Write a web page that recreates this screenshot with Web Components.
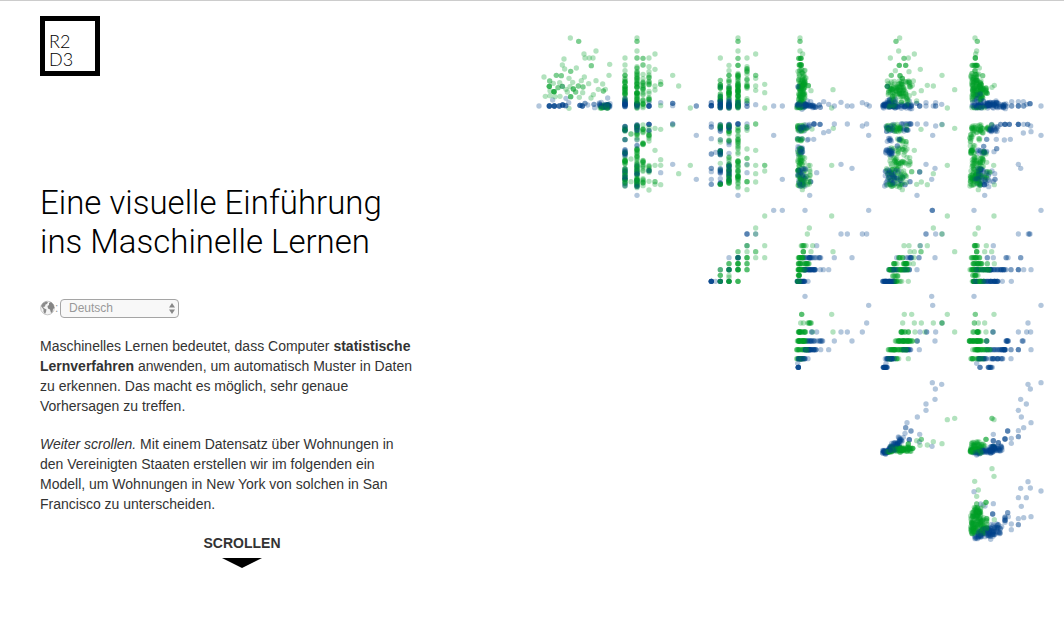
<!DOCTYPE html>
<html lang="de">
<head>
<meta charset="utf-8">
<meta name="viewport" content="width=device-width, initial-scale=1">
<title>Eine visuelle Einführung ins Maschinelle Lernen</title>
<style>
  body { margin: 0; background: #fff; color: #333; font-family: "Helvetica Neue", "Liberation Sans", Arial, sans-serif; }
</style>
</head>
<body>
<intro-page>
  <site-logo slot="logo"></site-logo>
  <page-title slot="intro">Eine visuelle Einführung<br>ins Maschinelle Lernen</page-title>
  <language-picker slot="intro"></language-picker>
  <text-block slot="intro">Maschinelles Lernen bedeutet, dass Computer <strong>statistische Lernverfahren</strong> anwenden, um automatisch Muster in Daten zu erkennen. Das macht es möglich, sehr genaue Vorhersagen zu treffen.</text-block>
  <text-block slot="intro"><em>Weiter scrollen.</em> Mit einem Datensatz über Wohnungen in den Vereinigten Staaten erstellen wir im folgenden ein Modell, um Wohnungen in New York von solchen in San Francisco zu unterscheiden.</text-block>
  <scroll-cue slot="intro">SCROLLEN</scroll-cue>
  <scatter-matrix slot="chart"></scatter-matrix>
</intro-page>

<script>
const define = (name, html, setup) => customElements.define(name, class extends HTMLElement {
  constructor() {
    super();
    const t = document.createElement('template');
    t.innerHTML = html;
    this.attachShadow({ mode: 'open' }).append(t.content.cloneNode(true));
    if (setup) setup(this.shadowRoot);
  }
});

define('site-logo', `
<style>
  :host { display: block; }
  a { display: flex; flex-direction: column; justify-content: flex-end; box-sizing: border-box; width: 60px; height: 60px;
      padding: 0 0 3px 4px; border: 5px solid #000; color: #000; text-decoration: none;
      font: 300 18px/18px Lato, sans-serif; }
</style>
<a href="#"><span>R2</span><span>D3</span></a>`);

define('page-title', `
<style>
  :host { display: block; }
  h1 { margin: 0; color: #000; font: 300 33px/39px Roboto, "Helvetica Neue", sans-serif; white-space: nowrap; }
</style>
<h1><slot></slot></h1>`);

define('language-picker', `
<style>
  :host { display: flex; align-items: center; height: 20px; margin: 37px 0 18px; color: #999; font-size: 12px; }
  label { display: flex; align-items: center; width: 20px; }
  .box { display: grid; width: 119px; }
  select, .arrows { grid-area: 1 / 1; }
  select { appearance: none; box-sizing: border-box; height: 19px; margin: 0; padding: 0 20px 1px 8px; border: 1px solid #a5a5a5;
           border-radius: 4px; background: #f8f8f8; color: #999; font: inherit; line-height: 16px; }
  .arrows { justify-self: end; align-self: center; margin-right: 4px; pointer-events: none; }
</style>
<label for="lang" aria-label="Sprache">
  <svg width="15" height="16" viewBox="0 0 15 16" aria-hidden="true">
    <circle cx="7.500" cy="8" r="6.800" fill="#f4f4f4" stroke="#bbb" stroke-width=".8"/>
    <path fill="#8c8c8c" d="M1 6 3 3 6 1.500 8 2 7 4 5.500 4.500 5 6.500 3 7 4.500 8.500 6.500 9.500 6 12 5 14 3.500 12 3.500 9.500Z"/>
    <path fill="#858585" d="M9 3 11 2 13.500 4.500 14.500 8 13 9 12.500 12 11 13 10 9.500 8 8.500 7.500 6 9 5Z"/>
  </svg>:
</label>
<span class="box">
  <select id="lang"><option>Deutsch</option><option>English</option><option>Français</option><option>Español</option></select>
  <svg class="arrows" width="6" height="11" viewBox="0 0 6 11" aria-hidden="true"><path fill="#888" d="M0 4.500 3 0 6 4.500ZM0 6.500H6L3 11Z"/></svg>
</span>`);

define('text-block', `
<style>
  :host { display: block; }
  p { max-width: 380px; margin: 0 0 18px; font-size: 14px; line-height: 20px; }
</style>
<p><slot></slot></p>`);

define('scroll-cue', `
<style>
  :host { display: block; max-width: 404px; }
  a { display: flex; flex-direction: column; align-items: center; gap: 4px; color: #333; font-size: 14px; font-weight: bold;
      line-height: 22px; text-decoration: none; }
</style>
<a href="#daten"><span><slot></slot></span>
  <svg width="40" height="10" viewBox="0 0 40 10" aria-hidden="true"><path d="M0 0H40L20 10Z"/></svg>
</a>`);

define('intro-page', `
<style>
  :host { display: block; border-top: 1px solid #ccc; }
  main { display: grid; grid-template-columns: minmax(0, 49fr) minmax(0, 52fr); padding: 15px 14px 0 40px; }
  .intro { padding-top: 107px; }
  .chart { padding-top: 9px; }
</style>
<main>
  <div><slot name="logo"></slot><div class="intro"><slot name="intro"></slot></div></div>
  <div class="chart"><slot name="chart"></slot></div>
</main>`);

/* Each panel: origin, then San Francisco (green) and New York (blue) homes.
   "x,y*n" is n homes at a place; "a:b" spreads them evenly, "m~s" around a mean. */
const PANELS = [
[0,0,
`121,39 146,49*2 198,78 162,87 165,99 178,99 189,99 102,102 97,120 184,122*2 239,118 139,129 104,132 122,139*2 79,151*2 94,152*2 117,160 42,156 163,156 154,167 237,151 198,167 59,168*2 70,175 89,173 128,172 145,183*2 159,186*2 97,184*2 58,184*4 72,200*5 60,197 84,188*2 108,193 120,185 130,192*3 137,201*2 122,215*3 176,176 205,193 218,177 220,198*2 226,193 158,203 190,209 183,219 46,214 112,201 90,214 60,212 75,215 148,217 210:236,240:250*16 117,250`,
`27,243 58,243*6 73,243*6 88,243*4 98,240*5 107,242*3 116,233 108,220 150,241*4 157,243*4 165,235*2 173,240 192,238*2 194,248 214,232 205:242,242~3*22 233,219 68,225 97,184`],
[0,0,
`321,39 321,49*2 321,78 285,99 285,120 285,137 285,151*3 285,160:178*5 285,185*5 285,190:235*12 321,99*2 321,120:150*5 321,150:195*12 321,203*5 321,200:250*16 339,100*2 339,120*2 339,148 339,160:210*9 339,215:250*6 357,99 357,125 357,140 357,150:180*6 357,195:230*5 375,87 375,133 375,183 375,195 392,170 392,178*2 392,242 428,151 446,183 481,249`,
`285,240~3*10 285,215:240*5 321,240~4*8 357,243*6 357,232 392,233 428,235*3 428,242 499,243*2`],
[0,0,
`285,305:320*5 285,340:350*2 285,370:390*3 285,395:420*8 285,430:485*14 303,327*2 321,300:345*8 321,370:410*10 321,410:485*24 339,300:325*5 339,345:360*4 339,405:440*7 339,460:485*5 357,300:360*6 357,410:445*5 357,469 357,495 375,310 375,376 375,421 375,470*2 375,478 392,313 392,404 392,421 392,479 303,402 303,470 321,488 428,300 446,446 481,421`,
`285,300:318*5 285,344*2 285,370:392*7 285,430:485*10 321,297:318*8 321,340:365*3 321,420:485*9 357,298*5 357,316*2 357,437*3 392,443 428,297*2 428,418 499,331 499,463 321,511`],
[480,0,
`144,39 144,49*2 144,78 144,100*2 144,121*3 144,140:185*12 144,185:250*26 117,121 117,137 117,151*3 117,160:195*6 117,202*4 117,195:250*12 91,99 91,166*2 91,175:190*6 91,205:250*12 171,99 171,120:150*5 171,155:200*6 171,215:230*3 197,87 197,151*2 197,160 197,183 197,196 224,178 224,203 224,249`,
`64,233*2 64,242*6 91,225:250*12 117,225:250*12 144,240~4*8 171,235*2 171,244*2 197,239 251,243 277,243 91,210:235*3 91,185 117,185`],
[480,0,
`91,300:320*6 91,340:355*2 91,370:390*4 91,415 91,435 91,478*5 117,300:330*6 117,340:350*3 117,395:425*6 117,430:480*16 144,305:345*6 144,345:400*6 144,405:445*10 144,450:490*10 171,300:325*3 171,372 171,400*2 171,420 171,470*3 171,494 197,297*2 197,376 197,421 197,446 197,471 224,421*2 224,438`,
`64,297 64,306*2 64,341 64,387*2 77,382 64,430*2 64,440 64,463 64,478*2 91,297:320*4 91,345 91,375:390*6 91,430:485*8 117,297:312*8 117,340:365*3 117,385 117,410:480*9 144,297*5 171,297 171,310 171,418 171,443 251,331 277,463 144,511`],
[480,0,
`330,39 330,49*2 330,78 338,87 325:338,100*5 328:335,120*6 322:345,133:150*8 325:350,150:180*14 325:345,165:210*30 355,182*3 363,197 429,194 325:345,205:250*24 425,249 320:340,248*4`,
`320:350,242~4*30 350:378,243~2*12 352,228 362,230 388,240*2 391,247*2 401,230 416,238 433,243 453,232 472,243 486,243 517,233 530,238 538,243 324,185*2`],
[480,0,
`322:345,300:320*14 350,310*2 366,312 430,310 322:338,340:348*6 322:336,370:392*8 322:345,395:425*14 322:345,430:485*26 350:362,420:480*8 337,494 425,421`,
`322:345,300:320*8 340:360,297:310*5 372,297*4 390,298*3 352,345 355,343 371,343 322:336,342*3 322:338,365:390*10 322:350,430:485*22 380,443 362,470*2 401,323 416,319 433,297 472,297 517,303 530,297 536,331 453,418 486,430 359,511`],
[1020,0,
`89,39 78,49*2 86,78 133,87 61,99 102,100*2 115,99 88,121*3 107,121*3 151,133 76,137 117,140 216,151 64,151*2 90,152*3 97,160*3 55:122,168:195*30 52,168 52,184*4 130,168 127,181 172,181 190,183 154,197 254,194 232,249 55:108,190:215*30 55:118,215:245*18 140,228 118,212 132,205`,
`38:75,241~4*40 75:125,243~3*22 52:80,220:236*8 118,228 140,235*2 149,243*3 168,233 168,243 190,243 197,243*2 197,233 215,238 52,184`],
[1020,0,
`50:95,298:320*24 153,313 254,310 216,299 110,300:325*3 80:105,340:350*5 108,350*2 108,357 60:115,365:392*12 133,376 60:120,395:425*22 50:110,430:485*38 125,440*2 232,421 190,446 172,479 154,471 140,478 149,440 97,494 89,487`,
`46:75,297:320*10 90:125,297*6 142,297 168,297 197,303 216,298 188,331 98:115,310:320*4 50:65,340:350*4 88,343*3 82,363*2 42:70,368:392*14 42:70,430:485*20 70:105,435:480*9 120,470*2 105,479*2 149,441*2 168,418 195,430 185,463 141,511`],
[1020,0,
`315,39 322,49*2 320,78 317,87 316,99*4 305:325,121*7 328,129 315,137*3 302:328,145:165*12 338,152*2 305:335,165:185*22 305:342,185:225*48 373,181 366,187 348,185:205*6 345:365,205*2 300:345,248*5`,
`305:350,242~4*24 350:385,240~5*30 385:412,243~4*10 308:335,205:235*8 340,228*2 360,232 402,238*2 425,230 425,243*2 445,230 445,243*3 460,230 461,243*2 470,238 480,236*3 513,243 378,228`],
[1020,0,
`305:340,299:325*22 345:360,305:315*5 365,300*2 300:312,325:350*6 325:330,340:350*3 300:315,360:385*12 335:348,378:388*4 305:340,395:425*24 300:335,430:485*50 350,412 371,421 340:360,440:470*6 373,479 325,494`,
`358:385,305:320*12 365,298 392,298*2 405,298*4 418,298*3 445,298*4 461,298 473,298*2 482,303 483,320 460,324 513,331 403,345 421,343 379,343 350,343*2 341,364*2 380,371*2 372,380 320:352,380~4*8 322:340,430:440*6 315:360,440:485*20 366,438 374,446 375,463*2 370,470 343,479*4 445,418 452,430 344,511`],
[480,525,
`224,48 197,84 197,102 171,137*2 224,137 144,155*2 171,155 197,155*2 144,173*4 171,173*4 197,173 224,173 117,191*3 144,191*6 171,191*3 91,209*2 117,209*5 144,209*6 171,209*3 91,226*3 117,226 117,232 91,244*3 117,244*6 144,244*4`,
`251,31 277,31 171,102*3 197,102 171,137 117,173 144,173*4 91,209 117,209*3 64,244*8 77,244 91,244*6 117,244*2 144,208`],
[480,525,
`425,48 358,84 352,102 333:350,137*4 368,137 340,155*4 363,155 429,155 325:342,173*10 325:360,191*14 322:345,209*16 325:330,226*5 320:332,244*8`,
`345,31 536,31 453,102 472,102 517,102 530,102 380,137 345:392,173*12 433,173 486,173 340:378,209*20 391,209 400,209 416,209 320:345,244*18 354,244`],
[480,525,
`335,343*3 425,343 332,369 340,369 352:364,369*4 325:348,396*12 368,396 429,396 322:352,423*20 320:355,449*14 320:340,476*8`,
`345,289 536,316 530,369 453,396 472,396 517,396 365,396*2 380,396 350:400,423*12 433,423 486,423 345:378,449*20 392,449 416,449 325:345,476*14 354,476 323,490 325,502*8`],
[1020,525,
`232,48 190,84 216,102 102,137 117,137 150,137 172,137 120,155 133,155 153,155*2 254,155 85:100,173*5 132,173 70:85,191*4 98:118,191*10 130,191 55:115,209*26 65:85,228*5 70:95,244*8 115,244`,
`187,31*3 168,102*2 197,102 216,102 151,137 80,173 105:125,173*5 147,173*2 195,173 55:115,209*12 118,209*3 141,209 38:75,244*30`],
[1020,525,
`372,48 325,84 315,102 312:322,137*5 349,137 344,155 365,155 320,155*4 302:330,173*10 305:335,191*12 352,191*2 373,191 300:360,209*30 305:325,226*6 305:345,244*18`,
`312,31 513,31 445,102 470:482,102*3 370,137 352,173*2 370,173 405:415,173*3 452,173*2 310:350,209*6 350:408,209*20 423,209*2 445,209*3 461,209 483,209 345:385,244*18 310:345,244*10 397,244 424,244`],
[1020,525,
`103,343 125,343 232,343 98,369 133,369 154,369 190,369 216,369*2 88:110,396*6 115,396*3 135,396 165,396 254,396 75:128,423*26 55:110,449*26 140,423 50:88,476*10 115,476`,
`185,289 188,316 216,369 170,396*2 197,396 150,396 195,423 142,423*2 100:122,449*8 148,449 45:75,476*16 48,490 38:52,502*12`],
[1020,525,
`316,343*2 372,343 313,369*2 325,369 344,369 308:330,396*8 348,396 369,396 298:335,423*24 350,423*2 308:360,449*20 303:345,476*12`,
`312,289 513,316 474,369 445,396 470,396 482,396 369,396*2 350,423*3 405:415,423*5 452:460,423*3 350:408,449*18 423,449*2 445,449*3 483,449 325:350,476*8 360:400,476*10 423,476 320,490 330,502*3 352:368,502*6`],
[1020,1035,
`232,149 254,145 154,208*2 190,215 216,221 172,225 140,212 150,226 128,235*4 60:125,238~4*60 115,222*3 48:70,245*10`,
`187,38 215,43 196,57 195,88 168,102 168,121 142,141 111,158 107,173*2 123,183*2 105,190 149,193 84:100,200:215*8 118,209*3 65:90,218:232*14 55:75,236~4*20 38:58,246~3*20 148,216 186,229`],
[1020,1035,
`366,145*2 372,149 348,208*3 305:345,215:232*20 300:340,242~4*50 370,230*2`,
`474,43 513,38 481,57 452,88 469,102 445,121 454,141 483,158 461,173 445,182 445,200*2 413,183*3 424,205 424,220 405,207*4 370,193 370,212*3 385,218*3 355:397,228:243*30 330:370,243~3*22 310:330,248~3*10`],
[1020,1035,
`366,296 372,319 314,334 325,360 320,379 348,397*3 320,402*2 340,405 304:332,412:440*30 301:343,435:492*75 350,445:480*6 373,449`,
`474,335 452,355 481,354 513,363 312,365 445,383 469,383 370,401 332,402 345,408 454,409 368,432*3 413,428*2 405,440:460*5 415,440 445,446 445,464*2 461,443 483,440 424,462 424,479 325:372,473:500*40 362:396,462:495*20 310:335,490:507*10 362,508`]
];

define('scatter-matrix', `
<style>
  :host { display: block; }
  svg { display: block; width: 100%; height: auto; overflow: visible; }
  circle { fill-opacity: .3; }
  .sf { fill: #00a028; }
  .ny { fill: #00418c; }
</style>
<svg viewBox="0 0 1560 1575" role="img" aria-label="Streudiagramm-Matrix der Wohnungen in San Francisco und New York"></svg>`,
root => {
  let seed = 7;
  const rnd = () => (seed = (seed * 16807) % 2147483647) / 2147483647;
  const value = s => {
    if (s.includes(':')) { const [a, b] = s.split(':').map(Number); return a + (b - a) * rnd(); }
    if (s.includes('~')) { const [m, d] = s.split('~').map(Number); return m + d * (rnd() + rnd() + rnd() - 1.5) * 2; }
    return Number(s);
  };
  const DENSITY = 1.6;
  const dots = [];
  for (const [ox, oy, sf, ny] of PANELS)
    for (const [kind, list] of [['sf', sf], ['ny', ny]])
      for (const item of list.split(' ')) {
        const [place, n = 1] = item.split('*');
        const [x, y] = place.split(',');
        const count = /[:~]/.test(place) && n > 3 ? n * DENSITY : n;
        for (let i = 0; i < count; i++) dots.push([rnd(), kind, ox + value(x), oy + value(y)]);
      }
  dots.sort((a, b) => a[0] - b[0]);
  root.querySelector('svg').innerHTML = dots.map(([, kind, x, y]) =>
    `<circle class="${kind}" cx="${Math.round(x)}" cy="${Math.round(y)}" r="8"/>`).join('');
});
</script>
</body>
</html>
